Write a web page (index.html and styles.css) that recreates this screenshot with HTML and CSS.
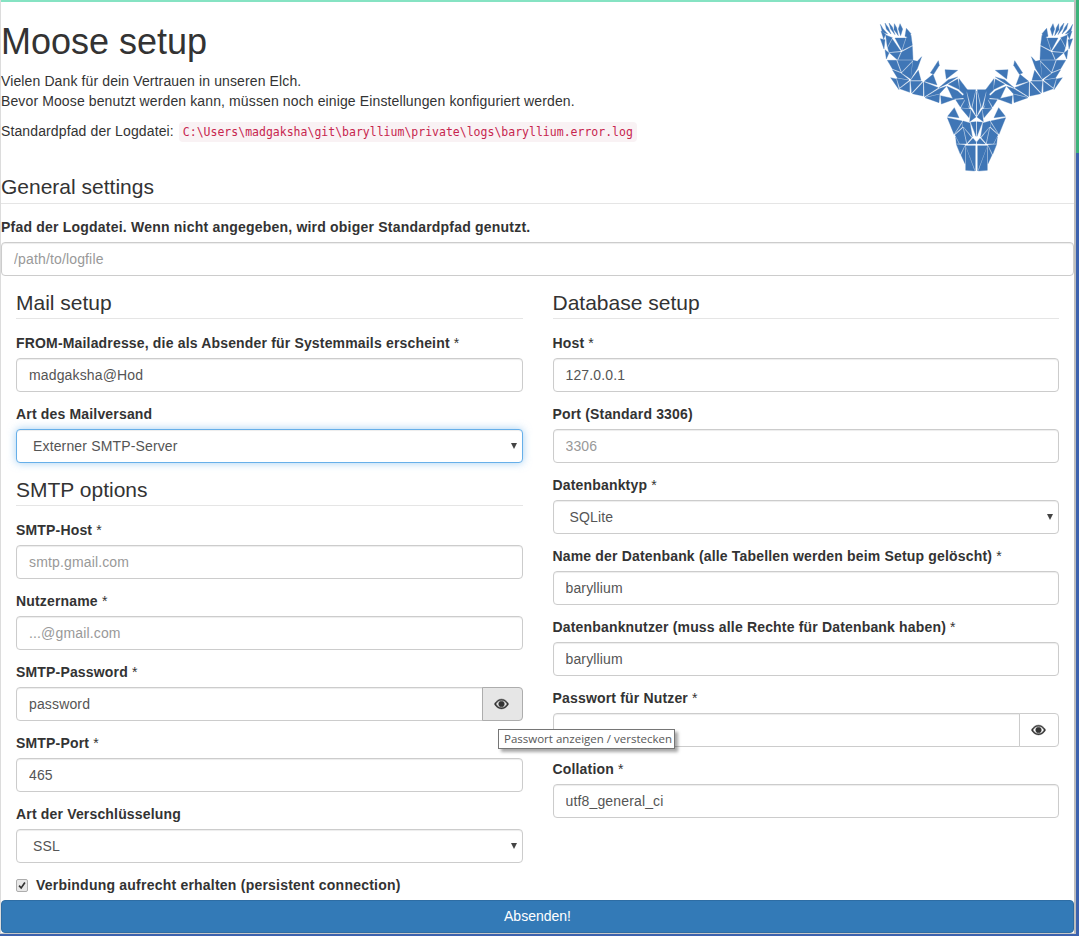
FILE: index.html
```html
<!DOCTYPE html>
<html lang="de">
<head>
<meta charset="utf-8">
<title>Moose setup</title>
<link rel="stylesheet" href="styles.css">
</head>
<body>
<div class="window">
  <div class="topbar"></div>
  <main class="main">
    <header class="head">
      <div class="intro">
        <h1>Moose setup</h1>
        <p>Vielen Dank für dein Vertrauen in unseren Elch.<br>Bevor Moose benutzt werden kann, müssen noch einige Einstellungen konfiguriert werden.</p>
        <p class="logline">Standardpfad der Logdatei: <code>C:\Users\madgaksha\git\baryllium\private\logs\baryllium.error.log</code></p>
      </div>
      <svg class="logo" viewBox="60 65 585 450" aria-hidden="true">
        <defs>
          <g id="half">
            <polygon points="64,72 72,85 86,101 70,96"/>
            <polygon points="78,68 88,82 96,101 82,86"/>
            <polygon points="90,68 100,80 108,103 95,86"/>
            <polygon points="106,70 113,82 118,106 105,88"/>
            <polygon points="123,70 131,86 125,106 118,86"/>
            <polygon points="142,84 156,100 150,112 138,108"/>
            <polygon points="66,92 80,102 74,116"/>
            <polygon points="80,104 100,112 85,140"/>
            <polygon points="64,115 78,118 75,146"/>
            <polygon points="108,113 140,113 128,150"/>
            <polygon points="100,116 125,152 90,156 86,142"/>
            <polygon points="142,112 156,104 160,135 130,150"/>
            <polygon points="78,148 90,158 82,176"/>
            <polygon points="92,158 125,155 115,178"/>
            <polygon points="128,155 160,138 162,178 118,178"/>
            <polygon points="85,180 112,180 125,215 100,205"/>
            <polygon points="115,180 162,180 128,215"/>
            <polygon points="162,180 175,183 188,169 175,205 155,236"/>
            <polygon points="128,218 160,185 155,236"/>
            <polygon points="100,208 125,218 150,238 115,232"/>
            <polygon points="95,232 112,236 120,268"/>
            <polygon points="113,234 150,240 122,262"/>
            <polygon points="122,265 152,243 152,276"/>
            <polygon points="155,240 178,210 186,240"/>
            <polygon points="155,243 190,243 158,278"/>
            <polygon points="160,280 192,246 192,287"/>
            <polygon points="195,245 238,262 196,289"/>
            <polygon points="196,243 222,222 234,254"/>
            <polygon points="214,218 238,181 241,195 224,222"/>
            <polygon points="198,292 242,282 240,307"/>
            <polygon points="200,290 240,265 262,258 242,280"/>
            <polygon points="245,286 288,296 247,311"/>
            <polygon points="258,208 296,210 262,236"/>
            <polygon points="240,262 268,238 296,230 265,250"/>
            <polygon points="268,252 296,236 302,268"/>
            <polygon points="264,258 296,272 318,292 282,296"/>
            <polygon points="300,235 325,268 318,285 302,270"/>
            <polygon points="290,298 318,296 304,320"/>
            <polygon points="320,296 330,324 306,322"/>
            <polygon points="322,268 350,268 337,322"/>
            <polygon points="310,288 322,272 332,322"/>
            <polygon points="340,322 351,272 351,345"/>
            <polygon points="306,324 335,326 330,352"/>
            <polygon points="336,328 351,350 332,364"/>
            <polygon points="266,348 286,322 300,352"/>
            <polygon points="265,352 310,362 285,402"/>
            <polygon points="312,364 288,400 310,380"/>
            <polygon points="335,366 351,364 351,408"/>
            <polygon points="312,362 333,368 340,410 312,378"/>
            <polygon points="288,404 312,382 322,430 302,430"/>
            <polygon points="314,382 338,412 324,428"/>
            <polygon points="342,414 351,424 351,430 326,431"/>
            <polygon points="290,410 300,430 292,430"/>
            <polygon points="292,432 318,434 304,462"/>
            <polygon points="320,436 349,436 349,512"/>
            <polygon points="320,438 347,512 320,510"/>
            <polygon points="306,464 318,438 318,490"/>
          </g>
        </defs>
        <use href="#half"/>
        <use href="#half" transform="translate(705 0) scale(-1 1)"/>
      </svg>
    </header>

    <h3 class="section general">General settings</h3>
    <div class="group">
      <label class="wide">Pfad der Logdatei. Wenn nicht angegeben, wird obiger Standardpfad genutzt.</label>
      <input class="field" placeholder="/path/to/logfile">
    </div>

    <div class="columns">
      <section class="col">
        <h3 class="section">Mail setup</h3>
        <div class="group">
          <label>FROM-Mailadresse, die als Absender für Systemmails erscheint <span class="req">*</span></label>
          <input class="field" value="madgaksha@Hod">
        </div>
        <div class="group">
          <label>Art des Mailversand</label>
          <div class="selectbox"><select class="field focus"><option>Externer SMTP-Server</option></select></div>
        </div>
        <h3 class="section">SMTP options</h3>
        <div class="group">
          <label>SMTP-Host <span class="req">*</span></label>
          <input class="field" placeholder="smtp.gmail.com">
        </div>
        <div class="group">
          <label>Nutzername <span class="req">*</span></label>
          <input class="field" placeholder="...@gmail.com">
        </div>
        <div class="group">
          <label>SMTP-Password <span class="req">*</span></label>
          <div class="inputgroup">
            <input class="field" value="password">
            <button class="eye hover" type="button"><svg viewBox="0 0 16 12"><path d="M8 .8C4.6.8 1.900 3 .4 6c1.500 3 4.200 5.200 7.600 5.200S14.100 9 15.600 6C14.100 3 11.400.8 8 .8zm0 9.100c-2.600 0-4.700-1.500-6-3.900 1.300-2.400 3.400-3.900 6-3.900s4.700 1.500 6 3.900c-1.300 2.400-3.400 3.900-6 3.900z"/><circle cx="8" cy="6" r="3"/></svg></button>
          </div>
        </div>
        <div class="group">
          <label>SMTP-Port <span class="req">*</span></label>
          <input class="field" value="465">
        </div>
        <div class="group">
          <label>Art der Verschlüsselung</label>
          <div class="selectbox"><select class="field"><option>SSL</option></select></div>
        </div>
        <label class="check"><span class="tick"><svg viewBox="0 0 12 12"><path d="M2.500 6.200l2.500 2.800 4.500-6.500" fill="none" stroke="#333" stroke-width="2"/></svg></span>Verbindung aufrecht erhalten (persistent connection)</label>
      </section>

      <section class="col">
        <h3 class="section">Database setup</h3>
        <div class="group">
          <label>Host <span class="req">*</span></label>
          <input class="field" value="127.0.0.1">
        </div>
        <div class="group">
          <label>Port (Standard 3306)</label>
          <input class="field" placeholder="3306">
        </div>
        <div class="group">
          <label>Datenbanktyp <span class="req">*</span></label>
          <div class="selectbox"><select class="field"><option>SQLite</option></select></div>
        </div>
        <div class="group">
          <label>Name der Datenbank (alle Tabellen werden beim Setup gelöscht) <span class="req">*</span></label>
          <input class="field" value="baryllium">
        </div>
        <div class="group">
          <label>Datenbanknutzer (muss alle Rechte für Datenbank haben) <span class="req">*</span></label>
          <input class="field" value="baryllium">
        </div>
        <div class="group">
          <label>Passwort für Nutzer <span class="req">*</span></label>
          <div class="inputgroup">
            <input class="field">
            <button class="eye" type="button"><svg viewBox="0 0 16 12"><path d="M8 .8C4.6.8 1.900 3 .4 6c1.500 3 4.200 5.200 7.600 5.200S14.100 9 15.600 6C14.100 3 11.400.8 8 .8zm0 9.100c-2.600 0-4.700-1.500-6-3.900 1.300-2.400 3.400-3.900 6-3.900s4.700 1.500 6 3.900c-1.300 2.400-3.400 3.900-6 3.900z"/><circle cx="8" cy="6" r="3"/></svg></button>
          </div>
        </div>
        <div class="group">
          <label>Collation <span class="req">*</span></label>
          <input class="field" value="utf8_general_ci">
        </div>
      </section>
    </div>
    <div class="tooltip">Passwort anzeigen / verstecken</div>
  </main>
  <button class="submit" type="button">Absenden!</button>
</div>
<div class="side">
  <div class="side-green"></div>
  <div class="side-blue"></div>
</div>
</body>
</html>
```
FILE: styles.css
```css
* { box-sizing: border-box; }
html, body { height: 100%; }
body {
  margin: 0;
  height: 936px;
  overflow: hidden;
  display: flex;
  align-items: flex-start;
  background: #3c62ae;
  font: 14px/20px "Liberation Sans", Arial, sans-serif;
  color: #333;
}
.window {
  width: 1076px;
  height: 934px;
  flex: none;
  display: flex;
  flex-direction: column;
  background: #fff;
  border-left: 1px solid #dcdcdc;
  border-right: 2px solid #bdbdbd;
  border-bottom: 1px solid #c8c8c8;
}
.topbar { height: 2px; flex: none; background: #86e3c3; }
.main { flex: 1; min-height: 0; overflow: hidden; position: relative; }
.head { display: flex; justify-content: space-between; height: 171px; }
h1 {
  margin: 20px 0 9px;
  font-size: 36px;
  line-height: 40px;
  font-weight: 500;
}
p { margin: 0 0 10px; letter-spacing: .12px; }
code {
  font: 11.5px "DejaVu Sans Mono", monospace;
  letter-spacing: 0;
  color: #c7254e;
  background: #f9f2f4;
  border-radius: 4px;
  padding: 3px 4px;
  margin-left: 1px;
}
.logo { width: 195px; height: 150px; margin-top: 20px; flex: none; }
.logo polygon { fill: #3f76b6; stroke: #3f76b6; stroke-width: 1; }
.section {
  margin: 0 0 14px;
  padding-top: 1px;
  padding-bottom: 2px;
  font-size: 21px;
  line-height: 27px;
  font-weight: 500;
  border-bottom: 1px solid #e5e5e5;
}
.general { margin-bottom: 13px; padding-top: 0; padding-bottom: 3px; }
.group { margin-bottom: 12px; }
label { display: block; margin-bottom: 5px; font-weight: 700; letter-spacing: .17px; }
.wide { letter-spacing: .21px; }
.req { font-weight: 400; }
.field {
  display: block;
  width: 100%;
  height: 34px;
  padding: 6px 12px;
  font: 14px/20px "Liberation Sans", Arial, sans-serif;
  letter-spacing: .15px;
  color: #555;
  background: #fff;
  border: 1px solid #ccc;
  border-radius: 4px;
  box-shadow: inset 0 1px 1px rgba(0,0,0,.075);
  outline: 0;
}
.field::placeholder { color: #999; opacity: 1; }
select.field { appearance: none; padding-left: 16px; }
.focus {
  border-color: #66afe9;
  box-shadow: inset 0 1px 1px rgba(0,0,0,.075), 0 0 8px rgba(102,175,233,.6);
}
.selectbox { position: relative; }
.selectbox::after {
  content: "";
  position: absolute;
  right: 6px;
  top: 14px;
  border: 3.500px solid transparent;
  border-top: 6px solid #444;
  border-bottom: 0;
}
.columns { display: flex; }
.col { flex: 1 1 0; min-width: 0; padding: 0 15px; }
.inputgroup { display: flex; }
.inputgroup .field { flex: 1; min-width: 0; border-radius: 4px 0 0 4px; }
.eye {
  flex: none;
  width: 40px;
  height: 34px;
  margin-left: -1px;
  padding: 0 2px 0 0;
  display: flex;
  align-items: center;
  justify-content: center;
  background: #fff;
  border: 1px solid #ccc;
  border-radius: 0 4px 4px 0;
}
.eye.hover { background: #e6e6e6; border-color: #adadad; width: 41px; padding-right: 1px; }
.eye svg { width: 15px; height: 12px; fill: #333; stroke: #333; stroke-width: .5; }
.check {
  display: flex;
  align-items: center;
  gap: 8px;
  margin: 0;
  letter-spacing: .22px;
}
.tick {
  width: 12px;
  height: 13px;
  flex: none;
  display: block;
  background: #e8e8e8;
  border: 1px solid #adadad;
  border-radius: 2px;
}
.tick svg { display: block; width: 10px; height: 11px; }
.tooltip {
  position: absolute;
  left: 497px;
  top: 727px;
  width: 177px;
  height: 20px;
  padding: 0 5px;
  font: 11.5px/18px "Open Sans", sans-serif;
  color: #575757;
  white-space: nowrap;
  background: #fff;
  border: 1px solid #767676;
  box-shadow: 3px 3px 3px rgba(0,0,0,.35);
}
.submit {
  flex: none;
  height: 33px;
  padding: 0 0 2px;
  font: 14px/20px "Liberation Sans", Arial, sans-serif;
  color: #fff;
  background: #337ab7;
  border: 1px solid #2e6da4;
  border-radius: 4px;
}
.side { flex: 1; height: 936px; display: flex; flex-direction: column; }
.side-green { height: 153px; background: #3cb37a; }
.side-blue { flex: 1; background: #3c62ae; }
```
